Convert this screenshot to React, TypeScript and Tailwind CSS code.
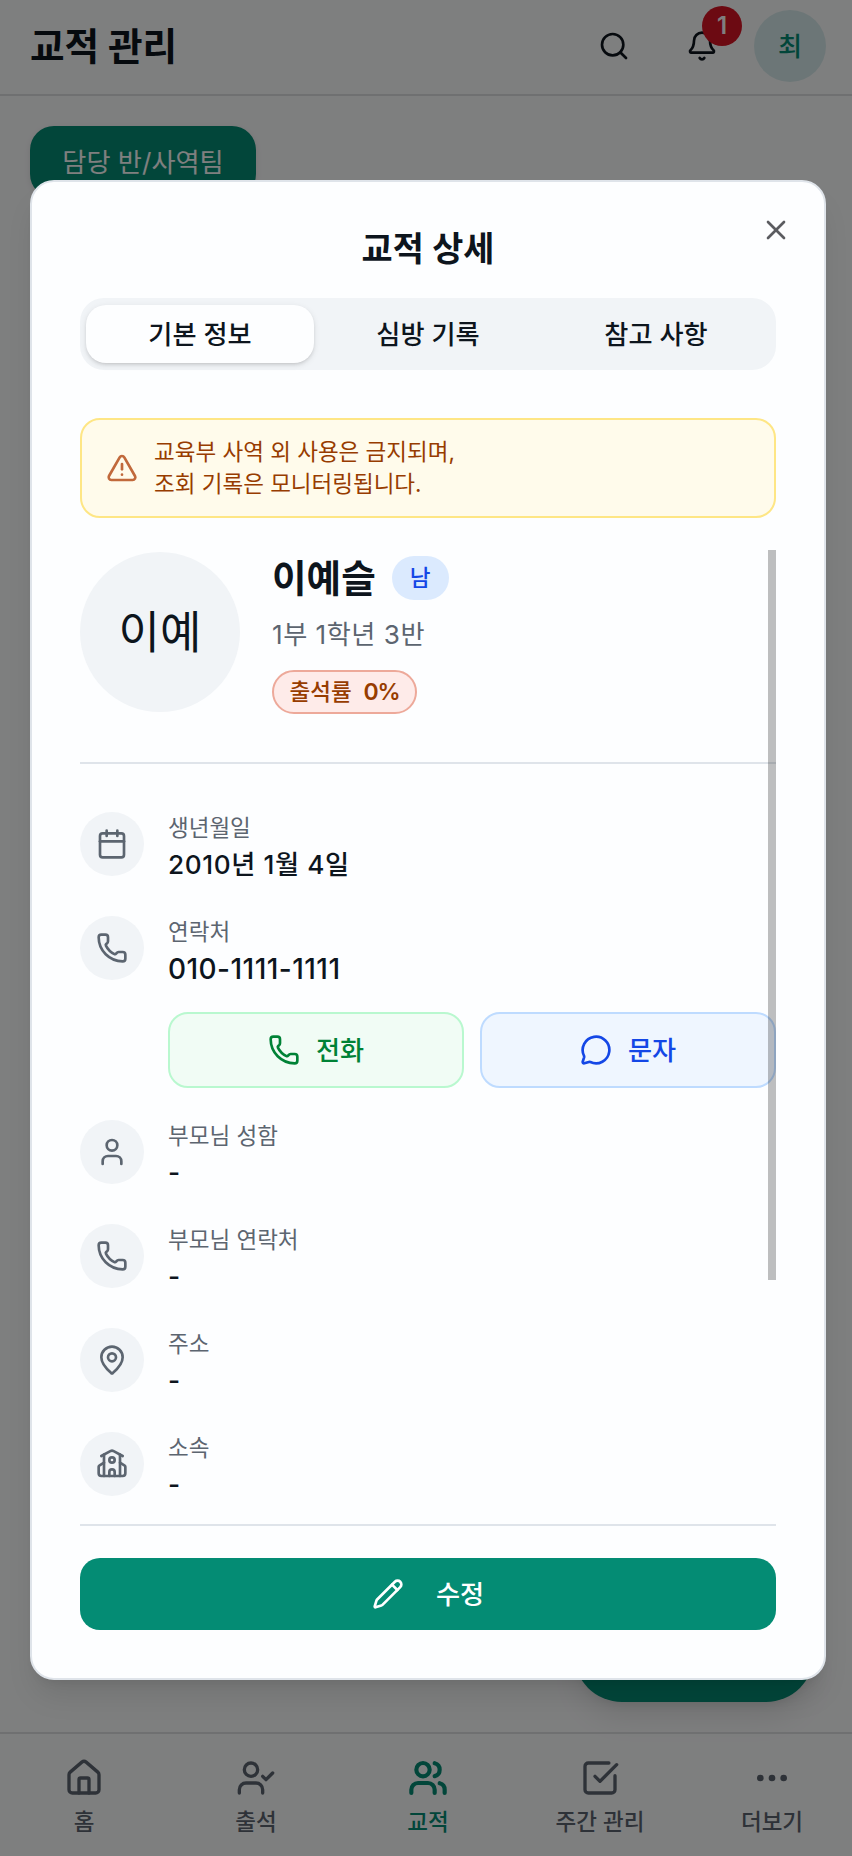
import type { ReactNode } from "react";
import {
    Bell,
    Calendar,
    Ellipsis,
    House,
    MapPin,
    MessageCircle,
    Pencil,
    Phone,
    School,
    Search,
    SquareCheckBig,
    TriangleAlert,
    User,
    UserCheck,
    Users,
    X,
    type LucideIcon,
} from "lucide-react";

interface InfoRowProps {
    icon: LucideIcon;
    label: string;
    value: ReactNode;
    children?: ReactNode;
}

const tabs = ["기본 정보", "심방 기록", "참고 사항"];

const navItems = [
    { icon: House, label: "홈" },
    { icon: UserCheck, label: "출석" },
    { icon: Users, label: "교적", active: true },
    { icon: SquareCheckBig, label: "주간 관리" },
    { icon: Ellipsis, label: "더보기" },
];

function InfoRow({ icon: Icon, label, value, children }: InfoRowProps) {
    return (
        <div className="flex gap-6">
            <div className="flex size-16 shrink-0 items-center justify-center rounded-full bg-[#f1f4f7] text-[#5c6570]">
                <Icon size={32} />
            </div>
            <div className="flex-1">
                <p className="h-8 text-[22.5px] leading-8 text-[#5c6570]">{label}</p>
                <p className="mt-px h-10 text-[26.2px] leading-10 font-medium tracking-[0.6px]">{value}</p>
                {children}
            </div>
        </div>
    );
}

function Header() {
    return (
        <header className="flex h-24 items-center justify-between border-b-2 border-[#dfe0e2] pb-0.5 pr-[30px] pl-[30px]">
            <h1 className="pt-0.5 text-[37.6px] leading-none font-bold">교적 관리</h1>
            <div className="flex items-center">
                <Search size={32} className="mr-[56px]" />
                <div className="relative mr-[36px]">
                    <Bell size={32} />
                    <span className="absolute -top-6 left-4 flex size-10 items-center justify-center rounded-full bg-[#d81424] text-2xl font-semibold text-white">
                        1
                    </span>
                </div>
                <div className="flex size-[72px] items-center justify-center rounded-full bg-[#d9edee] pt-0.5 text-[26.2px] font-medium text-[#048c74]">
                    최
                </div>
            </div>
        </header>
    );
}

function BottomNav() {
    return (
        <nav className="-ml-0.5 flex h-[124px] w-[860px] border-t-2 border-[#dfe0e2] pt-6">
            {navItems.map(({ icon: Icon, label, active }) => (
                <div
                    key={label}
                    className={`flex w-[172px] flex-col items-center gap-2 font-medium ${active ? "text-[#048c74]" : "text-[#5c6570]"}`}
                >
                    <Icon size={40} strokeWidth={active ? 2.5 : 2} />
                    <span className="text-[22.5px] leading-8">{label}</span>
                </div>
            ))}
        </nav>
    );
}

function DetailDialog() {
    return (
        <div className="relative flex h-[1500px] w-[796px] flex-col rounded-3xl border-2 border-[#dfe4ea] bg-[#fdfeff] px-12 pb-12 shadow-[0_20px_30px_-6px_rgba(0,0,0,0.1),0_8px_12px_-8px_rgba(0,0,0,0.1)]">
            <X size={32} className="absolute top-8 right-8 text-[#5b5c60]" />
            <h2 className="mt-12 pt-px text-center text-[33.8px] leading-9 font-semibold">교적 상세</h2>

            <div className="mt-[31px] grid h-[72px] shrink-0 grid-cols-3 rounded-3xl bg-[#f1f4f7] px-1.5 py-[7px] text-[26.2px] font-medium">
                {tabs.map((tab, i) => (
                    <div
                        key={tab}
                        className={`flex items-center justify-center rounded-[20px] pt-0.5 ${i === 0 ? "bg-[#fdfeff] shadow-[0_2px_6px_rgba(0,0,0,0.1),0_2px_4px_-2px_rgba(0,0,0,0.2)]" : ""}`}
                    >
                        {tab}
                    </div>
                ))}
            </div>

            <div className="mt-12 flex h-[100px] shrink-0 items-center gap-4 rounded-[20px] border-2 border-[#fee685] bg-[#fffbeb] px-6 text-[#973c00]">
                <TriangleAlert size={32} className="text-[#c1693b]" />
                <p className="text-[22.5px] leading-8">
                    교육부 사역 외 사용은 금지되며,
                    <br />
                    조회 기록은 모니터링됩니다.
                </p>
            </div>

            <div className="relative mt-8 h-[974px] shrink-0 overflow-hidden">
                <div className="flex h-[214px] gap-8 border-b-2 border-[#dfe4ea] pt-0.5">
                    <div className="flex size-40 items-center justify-center rounded-full bg-[#f1f4f7] pt-0.5 text-[45px]">
                        이예
                    </div>
                    <div className="pt-1">
                        <div className="flex h-11 items-center gap-4">
                            <h3 className="pt-0.5 text-[37.6px] leading-none font-bold">이예슬</h3>
                            <span className="flex h-11 w-[57px] items-center justify-center rounded-full bg-[#dbeafe] text-[22.5px] font-medium text-[#1447e6]">
                                남
                            </span>
                        </div>
                        <p className="mt-[15px] mb-[15px] text-[26.2px] leading-10 tracking-[0.5px] text-[#5c6570]">
                            1부 1학년 3반
                        </p>
                        <div className="flex h-11 w-[145px] items-center justify-center gap-3 rounded-full border-2 border-[#eda99a] bg-[#feebe9] text-[#973c00]">
                            <span className="text-[22.5px] font-medium">출석률</span>
                            <span className="text-[23px] font-semibold tracking-[-1.2px]">0%</span>
                        </div>
                    </div>
                </div>

                <div className="flex flex-col gap-[31px] pt-12">
                    <InfoRow icon={Calendar} label="생년월일" value="2010년 1월 4일" />
                    <InfoRow
                        icon={Phone}
                        label="연락처"
                        value={<span className="text-[28px] tracking-[0.45px]">010-1111-1111</span>}
                    >
                        <div className="mt-[23px] mb-px grid grid-cols-2 gap-4 text-[26.2px] font-medium">
                            <button className="flex h-[76px] items-center justify-center gap-4 rounded-[20px] border-2 border-[#b9f8cf] bg-[#f1fcf5] text-[#008236]">
                                <Phone size={32} />
                                <span className="pt-0.5">전화</span>
                            </button>
                            <button className="flex h-[76px] items-center justify-center gap-4 rounded-[20px] border-2 border-[#bedbff] bg-[#eff6ff] text-[#1447e6]">
                                <MessageCircle size={32} />
                                <span className="pt-0.5">문자</span>
                            </button>
                        </div>
                    </InfoRow>
                    <InfoRow icon={User} label="부모님 성함" value="-" />
                    <InfoRow icon={Phone} label="부모님 연락처" value="-" />
                    <InfoRow icon={MapPin} label="주소" value="-" />
                    <InfoRow icon={School} label="소속" value="-" />
                </div>

                {/* scroll thumb */}
                <div className="absolute top-0 right-0 h-[730px] w-2 bg-black/25" />
            </div>

            <div className="border-t-2 border-[#dfe4ea] pt-8">
                <button className="flex h-[72px] w-full items-center justify-center gap-8 rounded-[20px] bg-[#048c74] text-[26.2px] font-medium text-white">
                    <Pencil size={32} />
                    <span className="pt-0.5">수정</span>
                </button>
            </div>
        </div>
    );
}

export default function App() {
    return (
        <div className="relative h-[1856px] w-[852px] overflow-hidden bg-[#fdfeff] font-['Inter','Noto_Sans_CJK_KR',sans-serif] text-[#0d151d]">
            <div className="flex h-full w-[856px] flex-col">
                <Header />
                <main className="flex flex-1 flex-col items-start justify-between pt-[30px] pr-[42px] pb-[30px] pl-[30px]">
                    <button className="h-[72px] w-[226px] rounded-3xl bg-[#048c74] pt-0.5 text-[26.2px] text-white shadow-[0_2px_6px_rgba(0,0,0,0.1)]">
                        담당 반/사역팀
                    </button>
                    <button className="h-[96px] w-[240px] self-end rounded-full bg-[#048c74] shadow-[0_20px_30px_-6px_rgba(0,0,0,0.1),0_8px_12px_-8px_rgba(0,0,0,0.1)]" />
                </main>
                <BottomNav />
            </div>

            <div className="absolute inset-0 bg-black/50 pt-[180px] pl-[30px]">
                <DetailDialog />
            </div>
        </div>
    );
}
